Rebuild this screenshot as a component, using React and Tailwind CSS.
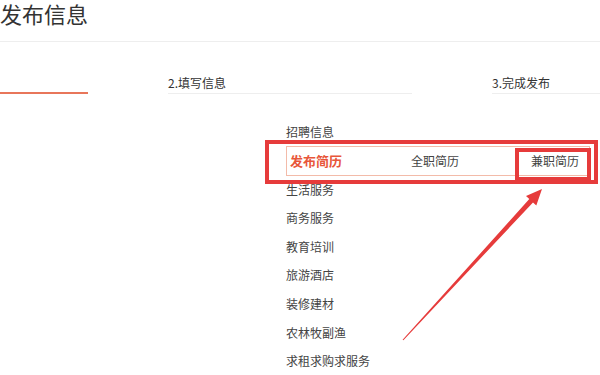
import React from 'react';

const FONT = { fontFamily: '"Noto Sans CJK SC", "Noto Sans", sans-serif' };

const STEPS = [
    { label: '1.选择类别', active: true },
    { label: '2.填写信息', active: false },
    { label: '3.完成发布', active: false },
];

const CATEGORIES = ['招聘信息', '发布简历', '生活服务', '商务服务', '教育培训', '旅游酒店', '装修建材', '农林牧副渔', '求租求购求服务'];

const Arrow = () => (
    <svg viewBox="0 0 600 375" className="absolute inset-0 w-[600px] h-[375px] pointer-events-none">
        <polygon
            points="403.4,340.3 533,202.5 536.3,205.5 542,189 526,196 529.3,199.1 402.6,339.7"
            fill="#e63b3b"
        />
    </svg>
);

const App = () => (
    <div className="relative w-[600px] h-[375px] overflow-hidden bg-white" style={FONT}>
        <div className="h-[42px] border-b border-[#eeeeee]">
            <h1 className="text-[22px] leading-[26px] text-[#333333]">发布信息</h1>
        </div>

        <div className="flex gap-[80px] -ml-[156px] mt-[33px]">
            {STEPS.map((step) => (
                <div
                    key={step.label}
                    className={
                        step.active
                            ? 'w-[244px] shrink-0 text-[12px] leading-[16px] text-[#333333] border-b-2 border-[#e8765a] pb-[1px]'
                            : 'w-[244px] shrink-0 text-[12px] leading-[16px] text-[#333333] border-b border-[#eeeeee] pb-[2px]'
                    }
                >
                    {step.label}
                </div>
            ))}
        </div>

        <ul className="mt-[24px] pl-[286px] text-[12px] text-[#444444]">
            {CATEGORIES.map((name) =>
                name === '发布简历' ? (
                    <li key={name} className="flex items-center h-[30px] -my-[0.7px] w-[304px] border border-[#f3bba9] pl-[3px]">
                        <span className="w-[121px] text-[13px] font-semibold text-[#e8563a]">{name}</span>
                        <span className="w-[120px]">全职简历</span>
                        <span>兼职简历</span>
                    </li>
                ) : (
                    <li key={name} className="flex items-center h-[28.625px]">
                        {name}
                    </li>
                )
            )}
        </ul>

        {/* red annotation marks */}
        <div className="absolute left-[265px] top-[140px] w-[333px] h-[44px] border-[4.5px] border-[#e63b3b]" />
        <div className="absolute left-[515px] top-[148px] w-[76px] h-[33px] border-4 border-[#e63b3b]" />
        <Arrow />
    </div>
);

export default App;
